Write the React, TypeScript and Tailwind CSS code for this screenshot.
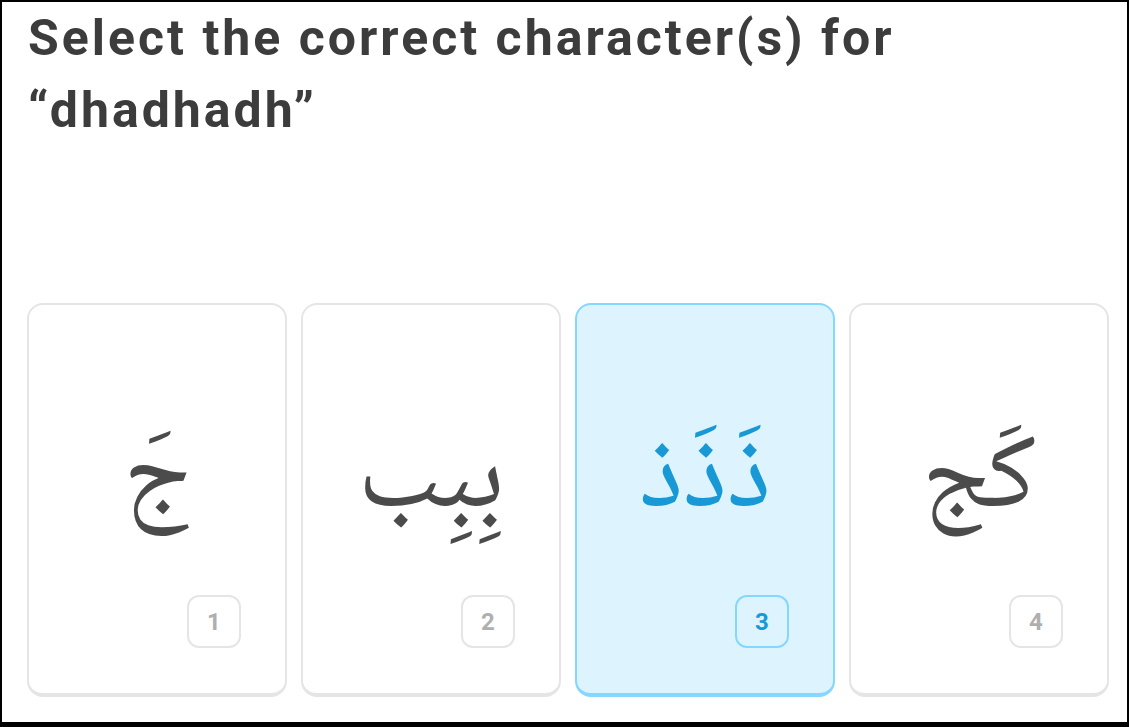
import React from "react";

type Opt = { n: number; ch: string; selected?: boolean };

const options: Opt[] = [
  { n: 1, ch: "جَ" },
  { n: 2, ch: "بِبِب" },
  { n: 3, ch: "ذَذَذ", selected: true },
  { n: 4, ch: "كَج" },
];

function Card({ o }: { o: Opt }) {
  const sel = !!o.selected;
  return (
    <div
      className={
        "flex h-[394px] w-[260px] flex-col rounded-[16px] border-2 border-b-4 " +
        (sel ? "border-[#84d8ff] bg-[#ddf4ff]" : "border-[#e5e5e5] bg-white")
      }
    >
      <div className="flex flex-1 items-center justify-center pt-[66px]">
        <span
          dir="rtl"
          className={
            "text-[106px] leading-none " + (sel ? "text-[#1899d6]" : "text-[#4b4b4b]")
          }
          style={{ fontFamily: '"Noto Naskh Arabic", "DejaVu Sans", sans-serif' }}
        >
          {o.ch}
        </span>
      </div>
      <div className="flex justify-end pb-[45px] pr-[44px]">
        <div
          className={
            "flex h-[53px] w-[54px] items-center justify-center rounded-[12px] border-2 text-[24px] font-bold " +
            (sel ? "border-[#84d8ff] text-[#1899d6]" : "border-[#e5e5e5] text-[#afafaf]")
          }
          style={{ fontFamily: "Roboto, sans-serif" }}
        >
          {o.n}
        </div>
      </div>
    </div>
  );
}

export default function App() {
  return (
    <div className="h-[727px] w-[1131px] bg-white">
      <div className="flex h-[727px] w-[1129px] flex-col border-x-2 border-t-2 border-b-[5px] border-black bg-white">
        <h1
          className="pl-[26px] text-[50px] font-bold leading-[72px] tracking-[3px] text-[#3c3c3c]"
          style={{ fontFamily: "Roboto, sans-serif" }}
        >
          Select the correct character(s) for
          <br />
          “dhadhadh”
        </h1>
        <div className="mt-[157px] flex gap-[14px] pl-[25px]">
          {options.map((o) => (
            <Card key={o.n} o={o} />
          ))}
        </div>
      </div>
    </div>
  );
}
